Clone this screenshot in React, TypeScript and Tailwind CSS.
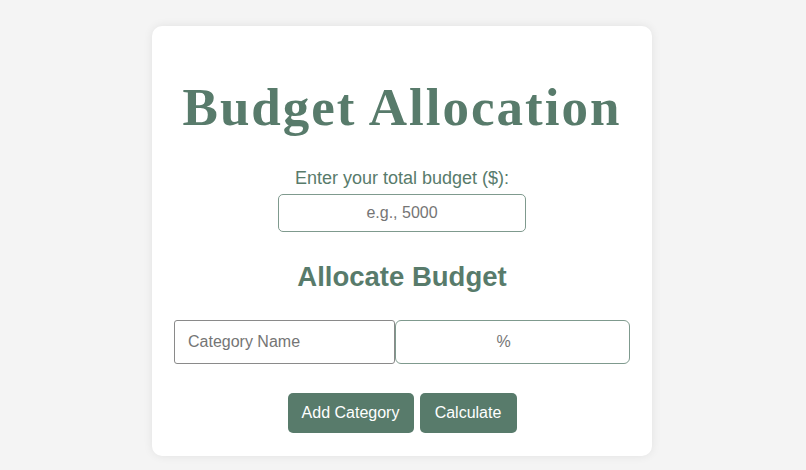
import React from "react";

export default function App() {
  return (
    <div className="min-h-[470px] w-full bg-[#f4f4f4] pt-[26px]" style={{ fontFamily: '"Liberation Sans", Arial, sans-serif' }}>
      <div className="ml-[152px] w-[500px] rounded-[10px] bg-white px-[22px] pb-[23px] pt-[54px] shadow-[0_0_10px_rgba(0,0,0,0.08)]">
        <h1
          className="text-center text-[53px] font-bold leading-[55px] tracking-[2px] text-[#587b6b]"
          style={{ fontFamily: '"Liberation Serif", Georgia, serif' }}
        >
          Budget Allocation
        </h1>
        <div className="mt-[33px] flex flex-col items-center">
          <label className="text-[18px] leading-[21px] text-[#587b6b]">Enter your total budget ($):</label>
          <input
            type="text"
            placeholder="e.g., 5000"
            className="mt-[5px] h-[38px] w-[248px] rounded-[5px] border border-[#7f9a8e] bg-white text-center text-[16px] text-[#333] outline-none placeholder:text-[#757575]"
          />
        </div>
        <h2 className="mt-[29px] text-center text-[27.5px] font-bold leading-[31px] text-[#587b6b]">Allocate Budget</h2>
        <div className="mt-[28px] flex">
          <input
            type="text"
            placeholder="Category Name"
            className="h-[44px] w-[221px] rounded-[3px] border border-[#8a8a8a] bg-white px-[13px] text-[16px] text-[#333] outline-none placeholder:text-[#757575]"
          />
          <input
            type="text"
            placeholder="%"
            className="h-[44px] min-w-0 flex-1 rounded-[6px] border border-[#7f9a8e] bg-white pr-[18px] text-center text-[16px] text-[#333] outline-none placeholder:text-[#757575]"
          />
        </div>
        <div className="mt-[29px] flex justify-center gap-[6px]">
          <button className="h-[40px] w-[126px] rounded-[5px] bg-[#587b6b] text-[16px] text-white">Add Category</button>
          <button className="h-[40px] w-[97px] rounded-[5px] bg-[#587b6b] text-[16px] text-white">Calculate</button>
        </div>
      </div>
    </div>
  );
}
